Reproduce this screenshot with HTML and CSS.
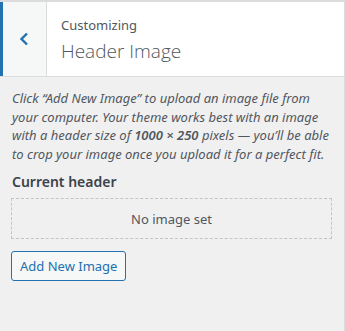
FILE: index.html
```html
<!DOCTYPE html>
<html lang="en">
<head>
  <meta charset="UTF-8" />
  <meta name="viewport" content="width=device-width, initial-scale=1.0"/>
  <title>Customizing Header Image</title>
  <link rel="stylesheet" href="styles.css">
</head>
<body>
  <div class="section-header">
    <button class="back-button" aria-label="Back">
      <svg width="12" height="14" viewBox="0 0 12 14">
        <polyline points="8,1.5 2.5,7 8,12.5" fill="none" stroke="#2271b1" stroke-width="2.4"/>
      </svg>
    </button>
    <div class="section-title">
      <span class="action">Customizing</span>
      <h3>Header Image</h3>
    </div>
  </div>

  <div class="section-content">
    <p class="description">
      Click “Add New Image” to upload an image file from your computer. Your theme works best with an image with a header size of <strong>1000 × 250</strong> pixels — you’ll be able to crop your image once you upload it for a perfect fit.
    </p>

    <div class="current-header">
      <span class="label">Current header</span>
      <div class="placeholder">No image set</div>
    </div>

    <button class="add-button">Add New Image</button>
  </div>
</body>
</html>
```

FILE: styles.css
```css
html, body {
  height: 100%;
}
body {
  margin: 0;
  box-sizing: border-box;
  background-color: #f0f0f1;
  border-right: 1px solid #dcdcde;
  font-family: "Noto Sans", "Open Sans", sans-serif;
  font-size: 13px;
  color: #50575e;
}
.section-header {
  display: flex;
  height: 77px;
  box-sizing: border-box;
  background-color: #fff;
  border-top: 2px solid #dcdcde;
  border-bottom: 1px solid #dcdcde;
}
.back-button {
  width: 47px;
  padding: 0;
  border: none;
  border-left: 3px solid #2271b1;
  border-right: 1px solid #dcdcde;
  background-color: #f6f7f7;
  display: flex;
  align-items: center;
  justify-content: center;
  cursor: pointer;
}
.section-title {
  padding: 13px 14px 0;
}
.action {
  display: block;
  font-size: 13px;
  line-height: 20px;
  color: #50575e;
}
.section-title h3 {
  margin: 3px 0 0;
  font-family: "Open Sans", "Noto Sans", sans-serif;
  font-size: 19px;
  font-weight: 300;
  line-height: 26px;
  color: #50575e;
}
.section-content {
  padding: 12px 12px 0;
}
.description {
  margin: 0;
  font-style: italic;
  line-height: 18.5px;
}
.description strong {
  font-weight: 600;
}
.current-header {
  margin-top: 9px;
}
.label {
  display: block;
  font-size: 14px;
  font-weight: 600;
  line-height: 20px;
  color: #3c434a;
}
.placeholder {
  margin: 6px 0 0 -1px;
  height: 39px;
  border: 1px dashed #c3c4c7;
  display: flex;
  align-items: center;
  justify-content: center;
  font-size: 13px;
}
.add-button {
  margin: 12px 0 0 -1px;
  height: 30px;
  padding: 0 8px;
  border: 1px solid #2271b1;
  border-radius: 3px;
  background-color: #f6f7f7;
  color: #2271b1;
  font-family: inherit;
  font-size: 13px;
  cursor: pointer;
}
```
